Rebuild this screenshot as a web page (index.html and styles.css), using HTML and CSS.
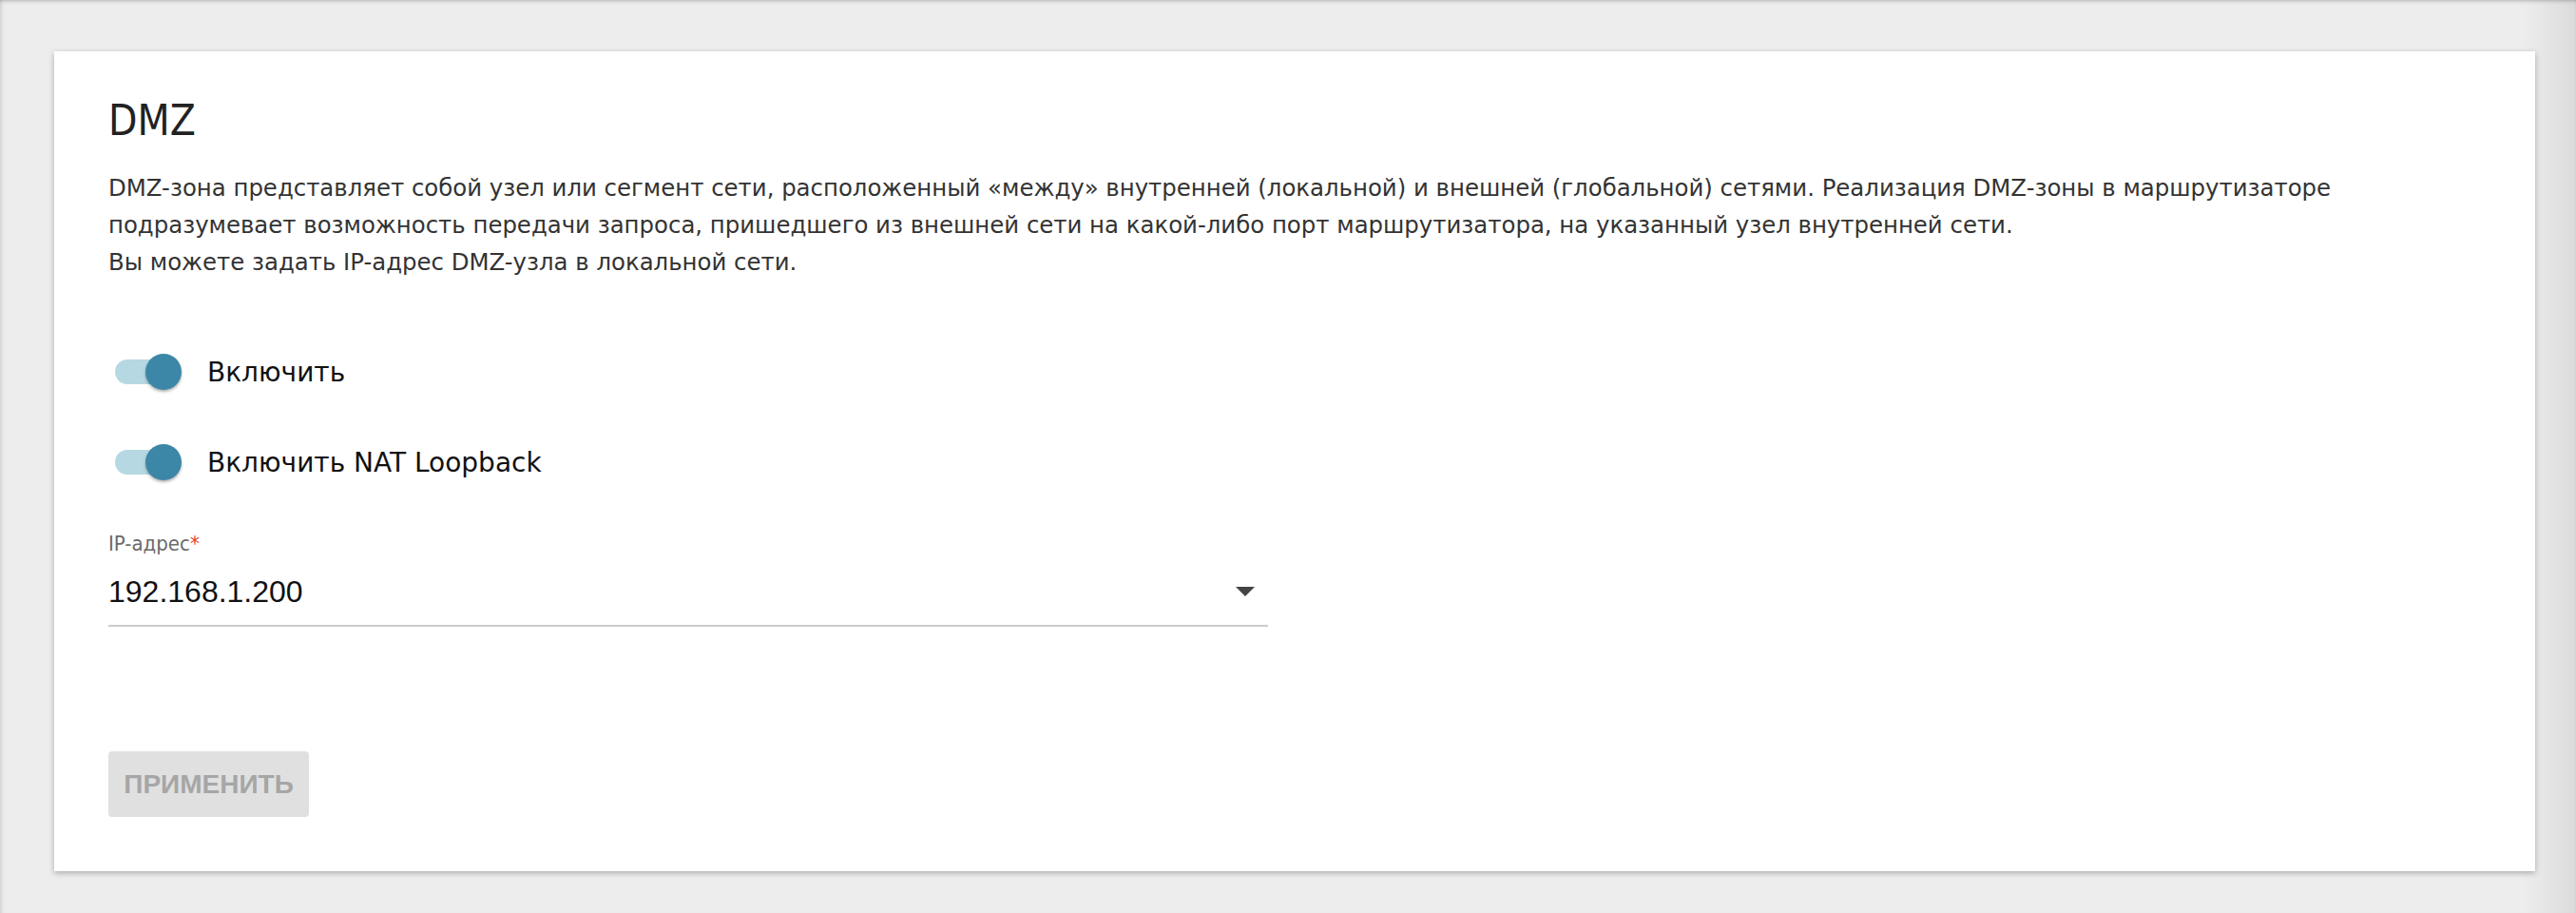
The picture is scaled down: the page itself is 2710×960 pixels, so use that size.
FILE: index.html
```html
<!DOCTYPE html>
<html lang="ru">
<head>
<meta charset="utf-8">
<title>DMZ</title>
<link rel="stylesheet" href="styles.css">
</head>
<body>
<div class="page">
  <section class="card">
    <h1 class="title">DMZ</h1>
    <p class="desc">DMZ-зона представляет собой узел или сегмент сети, расположенный «между» внутренней (локальной) и внешней (глобальной) сетями. Реализация DMZ-зоны в маршрутизаторе<br>подразумевает возможность передачи запроса, пришедшего из внешней сети на какой-либо порт маршрутизатора, на указанный узел внутренней сети.<br>Вы можете задать IP-адрес DMZ-узла в локальной сети.</p>
    <div class="toggles">
      <label class="toggle-row">
        <span class="switch"><span class="track"></span><span class="knob"></span></span>
        <span class="toggle-label">Включить</span>
      </label>
      <label class="toggle-row">
        <span class="switch"><span class="track"></span><span class="knob"></span></span>
        <span class="toggle-label">Включить NAT Loopback</span>
      </label>
    </div>
    <div class="field">
      <div class="field-label">IP-адрес<span class="req">*</span></div>
      <div class="field-input">
        <span class="field-value">192.168.1.200</span>
        <svg class="caret" width="20" height="10" viewBox="0 0 20 10"><path d="M0 0H20L10 10Z" fill="#444"/></svg>
      </div>
    </div>
    <button class="apply" type="button" disabled>ПРИМЕНИТЬ</button>
  </section>
</div>
</body>
</html>
```
FILE: styles.css
```css
html, body {
  margin: 0;
  padding: 0;
}
body {
  background: #ededed;
  font-family: "DejaVu Sans Condensed", "DejaVu Sans", sans-serif;
  color: #222;
}
.page {
  height: 960px;
  box-sizing: border-box;
  padding: 54px 43px 0 57px;
  background: linear-gradient(to right, rgba(0,0,0,0) 2655px, #dbdbdb 2710px), #ededed;
  box-shadow: inset 0 3px 4px -2px rgba(0,0,0,0.25), inset 5px 0 5px -4px rgba(0,0,0,0.12);
}
.card {
  background: #fff;
  padding: 47px 57px 57px;
  box-shadow: 0 2px 6px rgba(0,0,0,0.28);
}
.title {
  margin: 0;
  font-weight: normal;
  font-size: 44px;
  line-height: 52px;
  color: #222;
}
.desc {
  margin: 25px 0 0;
  font-family: "DejaVu Sans", sans-serif;
  font-size: 24.4px;
  line-height: 39px;
  color: #333;
  white-space: nowrap;
}
.toggles {
  margin-top: 68px;
  display: flex;
  flex-direction: column;
  gap: 39px;
}
.toggle-row {
  display: flex;
  align-items: center;
  height: 56px;
  gap: 27px;
}
.switch {
  position: relative;
  width: 77px;
  height: 38px;
  flex: none;
}
.track {
  position: absolute;
  left: 7px;
  top: 6px;
  width: 62px;
  height: 26px;
  border-radius: 13px;
  background: #b6d8e2;
}
.knob {
  position: absolute;
  left: 39px;
  top: 0;
  width: 38px;
  height: 38px;
  border-radius: 50%;
  background: #3c87a8;
  box-shadow: 0 2px 3px rgba(0,0,0,0.3);
}
.toggle-label {
  font-family: "DejaVu Sans", sans-serif;
  font-size: 28px;
  color: #111;
}
.field {
  margin-top: 43px;
  width: 1220px;
}
.field-label {
  font-size: 22px;
  line-height: 30px;
  color: #6b6b6b;
}
.req {
  color: #e2402c;
}
.field-input {
  margin-top: 13px;
  display: flex;
  align-items: center;
  justify-content: space-between;
  height: 44px;
  padding-bottom: 13px;
  border-bottom: 2px solid #cccccc;
}
.field-value {
  font-family: "Liberation Sans", Arial, sans-serif;
  font-size: 32px;
  color: #111;
}
.caret {
  margin-right: 14px;
}
.apply {
  display: block;
  margin-top: 131px;
  width: 211px;
  height: 69px;
  padding: 0;
  border: none;
  border-radius: 4px;
  background: #e0e0e0;
  color: #a6a6a6;
  font-family: "Liberation Sans", Arial, sans-serif;
  font-weight: bold;
  font-size: 28px;
}
```
